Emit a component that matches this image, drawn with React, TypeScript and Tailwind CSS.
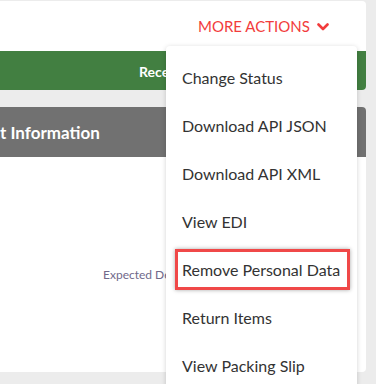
import React from "react";

const items = [
  "Change Status",
  "Download API JSON",
  "Download API XML",
  "View EDI",
  "Remove Personal Data",
  "Return Items",
  "View Packing Slip",
];

export default function App() {
  return (
    <div
      className="relative w-[376px] h-[384px] overflow-hidden bg-[#ececec]"
      style={{ fontFamily: "Lato, 'Open Sans', sans-serif" }}
    >
      <div className="flex flex-col w-[366px]">
        {/* top card */}
        <div className="mt-[1px] rounded-r-[4px] bg-white overflow-hidden">
          <div className="h-[50px] flex items-center pl-[198px]">
            <span className="text-[15px] leading-none text-[#f23c3c]">
              MORE ACTIONS
            </span>
            <svg
              className="ml-[7px] mt-[1px]"
              width="12"
              height="8"
              viewBox="0 0 12 8"
              fill="none"
            >
              <path
                d="M1.5 1.5 L6 6 L10.5 1.5"
                stroke="#f23c3c"
                strokeWidth="2.6"
                strokeLinecap="round"
                strokeLinejoin="round"
              />
            </svg>
          </div>
          <div className="h-[39px] bg-[#427f41] flex items-center">
            <div className="w-[166px] overflow-hidden whitespace-nowrap pl-[139px]">
              <span className="text-[14px] font-bold text-white leading-none">
                Received
              </span>
            </div>
          </div>
        </div>

        {/* second card */}
        <div className="mt-[17px] h-[265px] rounded-r-[4px] bg-white overflow-hidden flex flex-col">
          <div className="h-[50px] bg-[#717171] flex items-center shrink-0">
            <span className="text-[17px] font-bold text-white leading-none">
              t Information
            </span>
          </div>
          <div className="flex-1 relative">
            <div className="absolute left-[103px] top-[112px] w-[63px] overflow-hidden whitespace-nowrap text-[12px] text-[#71698a] leading-none">
              Expected Delivery
            </div>
          </div>
        </div>
      </div>

      {/* dropdown */}
      <div className="absolute left-[166px] top-[46px] w-[191px] h-[360px] bg-white rounded-[4px] shadow-[0_1px_5px_rgba(0,0,0,0.18)] pt-[8px]">
        {items.map((t) => (
          <div
            key={t}
            className="relative h-[48px] flex items-center pl-[16px] text-[16px] text-[#333333] leading-none"
          >
            {t === "Remove Personal Data" && (
              <div className="absolute left-[9px] right-[7px] top-[3px] bottom-[4px] border-[3px] border-[#f04848] shadow-[0_0_4px_rgba(0,0,0,0.35)]" />
            )}
            <span className="relative">{t}</span>
          </div>
        ))}
      </div>
    </div>
  );
}
